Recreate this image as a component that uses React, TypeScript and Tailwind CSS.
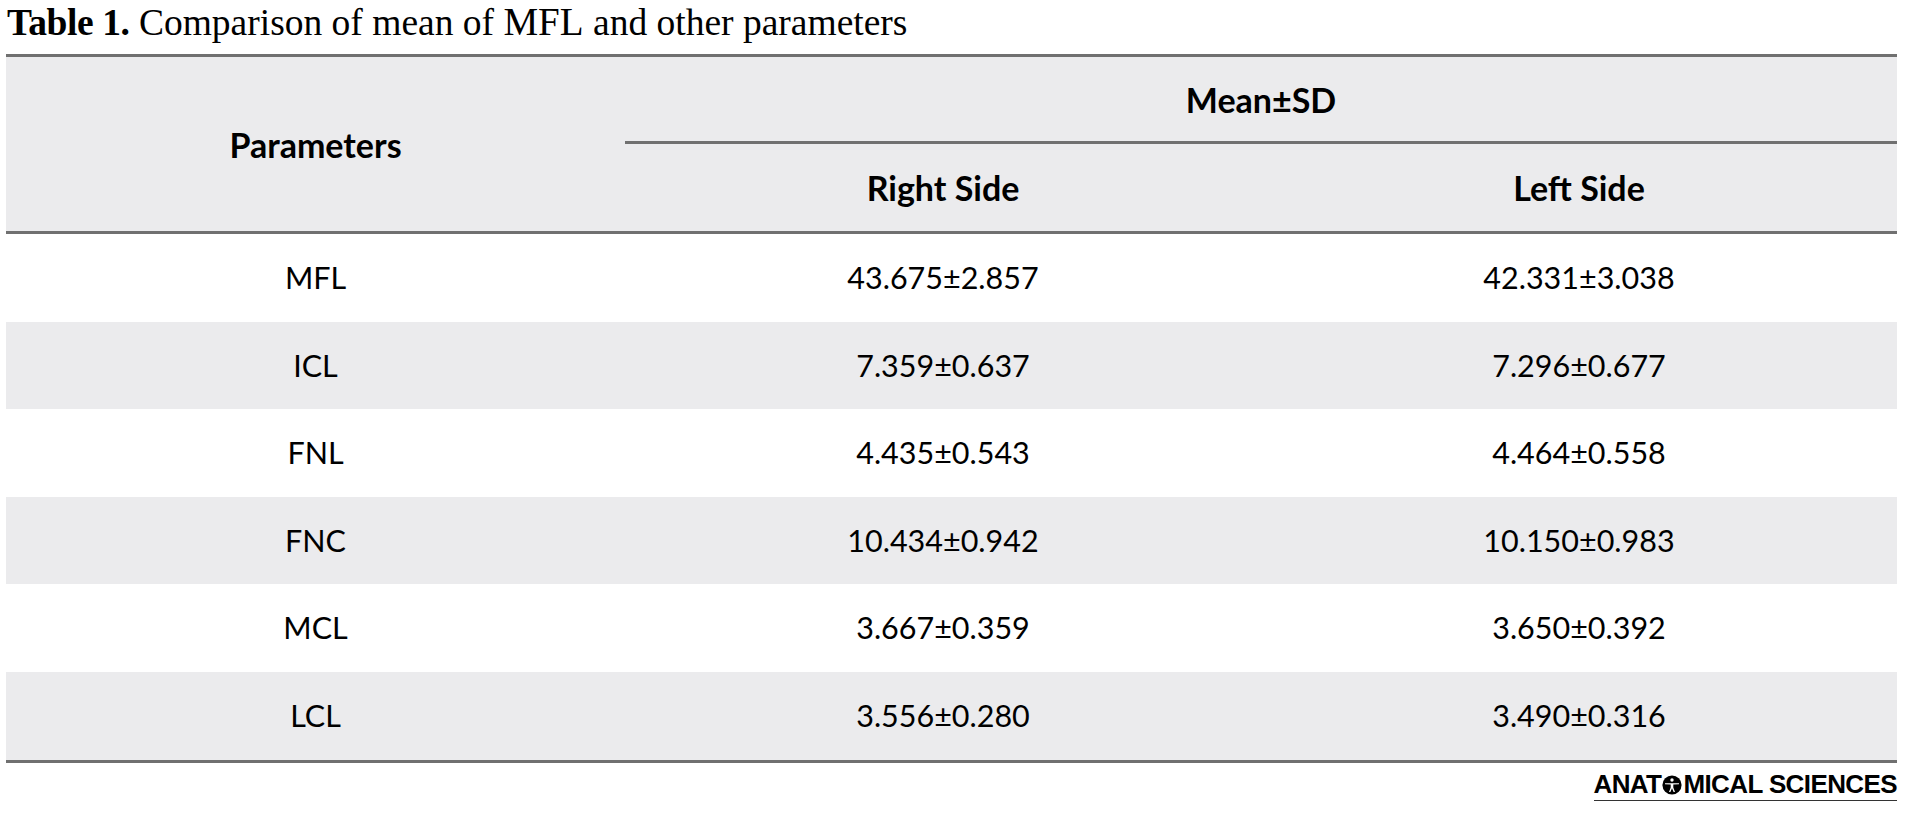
import React from 'react';

type Row = { name: string; right: string; left: string };

const rows: Row[] = [
  { name: 'MFL', right: '43.675±2.857', left: '42.331±3.038' },
  { name: 'ICL', right: '7.359±0.637', left: '7.296±0.677' },
  { name: 'FNL', right: '4.435±0.543', left: '4.464±0.558' },
  { name: 'FNC', right: '10.434±0.942', left: '10.150±0.983' },
  { name: 'MCL', right: '3.667±0.359', left: '3.650±0.392' },
  { name: 'LCL', right: '3.556±0.280', left: '3.490±0.316' },
];

const sans = "font-['Lato','Open_Sans',sans-serif]";

const LogoMark = () => (
  <svg viewBox="0 0 20 20" className="w-[20px] h-[20px] mx-[1px] translate-y-[1px]">
    <circle cx="10" cy="10" r="9.6" fill="#000" />
    <circle cx="10" cy="5" r="1.7" fill="#fff" />
    <path d="M3 8.2 L17 8.2 L17 9.3 L11.3 9.6 L11.3 12.5 L13 17 L11.6 17 L10 13.2 L8.4 17 L7 17 L8.7 12.5 L8.7 9.6 L3 9.3 Z" fill="#fff" />
  </svg>
);

export default function App() {
  return (
    <div className="w-[1908px] h-[818px] bg-white text-black">
      {/* Titulo */}
      <div className="h-[54px] pl-[7px] pt-[2px] font-['Liberation_Serif',serif] text-[37.5px] leading-[40px] whitespace-nowrap">
        <span className="font-bold tracking-[-0.4px]">Table 1.</span> Comparison of mean of{' '}
        <span className="text-[39px]">MFL</span> and other parameters
      </div>

      {/* Tabela */}
      <div className={`mx-[6px] w-[1891px] border-y-[3px] border-[#707070] ${sans}`}>
        <div className="grid grid-cols-[619px_1fr_1fr] bg-[#ebebed] border-b-[3px] border-[#707070]">
          <div className="row-span-2 flex items-center justify-center font-bold text-[34px]">Parameters</div>
          <div className="col-span-2 h-[87px] flex items-center justify-center font-bold text-[34px] border-b-[3px] border-[#707070]">
            Mean±SD
          </div>
          <div className="h-[87px] flex items-center justify-center font-bold text-[34px]">Right Side</div>
          <div className="h-[87px] flex items-center justify-center font-bold text-[34px]">Left Side</div>
        </div>

        {rows.map((row, i) => (
          <div
            key={row.name}
            className={`grid grid-cols-[619px_1fr_1fr] h-[87.6px] items-center text-[30.5px] ${i % 2 === 1 ? 'bg-[#ebebed]' : 'bg-white'}`}
          >
            <div className="text-center">{row.name}</div>
            <div className="text-center">{row.right}</div>
            <div className="text-center">{row.left}</div>
          </div>
        ))}
      </div>

      {/* Logo */}
      <div className="flex justify-end pr-[11px] pt-[8px]">
        <div className="flex items-center border-b border-[#333] pb-[3px] font-['Liberation_Sans',sans-serif] font-bold text-[26px] leading-[26px] tracking-[-0.6px]">
          <span>ANAT</span>
          <LogoMark />
          <span>MICAL SCIENCES</span>
        </div>
      </div>
    </div>
  );
}
